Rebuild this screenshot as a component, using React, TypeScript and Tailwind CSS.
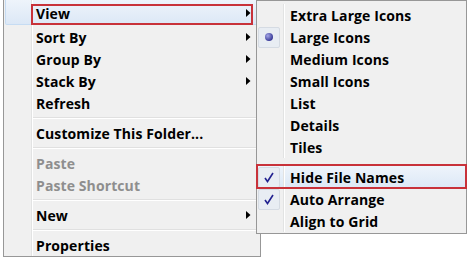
import { ReactNode } from 'react'

const font = { fontFamily: '"Open Sans", "Liberation Sans", sans-serif' }

function Arrow() {
  return (
    <svg width="5" height="8" viewBox="0 0 5 8" className="mr-[9px] shrink-0">
      <path d="M0 0 L4.5 4 L0 8 Z" fill="#000" />
    </svg>
  )
}

function MainRow({
  label,
  arrow,
  disabled,
  tall,
}: {
  label: string
  arrow?: boolean
  disabled?: boolean
  tall?: boolean
}) {
  return (
    <div className={`flex ${tall ? 'h-[26px]' : 'h-[22px]'}`}>
      <div className="w-[27px] shrink-0" />
      <div className="flex flex-1 items-center border-l border-[#e2e3e3] shadow-[inset_1px_0_0_#ffffff]">
        <span
          className={`flex-1 pl-[4px] pt-[2px] text-[14px] font-bold leading-none tracking-[0.1px] ${disabled ? 'text-[#8e8e8e]' : 'text-black'}`}
        >
          {label}
        </span>
        {arrow && <Arrow />}
      </div>
    </div>
  )
}

function MainSep() {
  return (
    <div className="flex h-[8px]">
      <div className="w-[27px] shrink-0" />
      <div className="flex flex-1 items-center border-l border-[#e2e3e3] shadow-[inset_1px_0_0_#ffffff]">
        <div className="ml-[1px] h-[2px] flex-1 border-t border-[#e0e0e0] border-b border-b-white" />
      </div>
    </div>
  )
}

function SubRow({ label, mark }: { label: string; mark?: ReactNode }) {
  return (
    <div className="flex h-[22px]">
      <div className="flex w-[26px] shrink-0 items-center pl-[1px]">
        {mark && (
          <div className="flex h-[21px] w-[22px] items-center justify-center rounded-[2px] border border-[#d5dbe3] bg-[#e8edf3]">
            {mark}
          </div>
        )}
      </div>
      <div className="flex flex-1 items-center border-l border-[#e2e3e3] shadow-[inset_1px_0_0_#ffffff]">
        <span className="pl-[6px] pt-[2px] text-[14px] font-bold leading-none tracking-[0.1px] text-black">
          {label}
        </span>
      </div>
    </div>
  )
}

const Dot = (
  <div className="h-[8px] w-[8px] rounded-full bg-[radial-gradient(circle_at_35%_35%,#a4a6e6,#3b3d9a_70%)]" />
)

const Check = (
  <svg width="10" height="11" viewBox="0 0 10 11">
    <path d="M1 6 L3.5 9.5 L9 1" stroke="#222290" strokeWidth="1.6" fill="none" />
  </svg>
)

export default function App() {
  return (
    <div className="relative h-[259px] w-[469px] overflow-hidden bg-white" style={font}>
      {/* Main context menu */}
      <div className="ml-[3px] w-[258px] border-x border-b border-[#979797] bg-[#f0f0f0]">
        <div className="relative">
          <div className="absolute inset-x-[1px] top-0 bottom-[1px] rounded-b-[2px] border border-t-0 border-[#c6dcf3] bg-gradient-to-b from-[#eef4fb] to-[#dce8f6]" />
          <div className="relative">
            <MainRow label="View" arrow tall />
          </div>
          <div className="absolute left-[27px] top-[4px] h-[21px] w-[222px] border-2 border-[#c8323a]" />
        </div>
        <MainRow label="Sort By" arrow />
        <MainRow label="Group By" arrow />
        <MainRow label="Stack By" arrow />
        <MainRow label="Refresh" />
        <MainSep />
        <MainRow label="Customize This Folder..." />
        <MainSep />
        <MainRow label="Paste" disabled />
        <MainRow label="Paste Shortcut" disabled />
        <MainSep />
        <MainRow label="New" arrow />
        <MainSep />
        <MainRow label="Properties" />
      </div>

      {/* View submenu */}
      <div className="absolute left-[256px] top-0 w-[211px] border border-[#979797] bg-[#f0f0f0] pt-[3px] pb-[1px]">
        <SubRow label="Extra Large Icons" />
        <SubRow label="Large Icons" mark={Dot} />
        <SubRow label="Medium Icons" />
        <SubRow label="Small Icons" />
        <SubRow label="List" />
        <SubRow label="Details" />
        <SubRow label="Tiles" />
        <div className="h-[8px]" />
        <div className="relative">
          <div className="absolute inset-0 bg-gradient-to-b from-[#eef4fb] to-[#dce8f6]" />
          <div className="relative">
            <SubRow label="Hide File Names" mark={Check} />
          </div>
          <div className="absolute -left-[1px] -right-[1px] -top-[2px] -bottom-[1px] border-2 border-[#c8323a]" />
        </div>
        <SubRow label="Auto Arrange" mark={Check} />
        <SubRow label="Align to Grid" />
      </div>
    </div>
  )
}
